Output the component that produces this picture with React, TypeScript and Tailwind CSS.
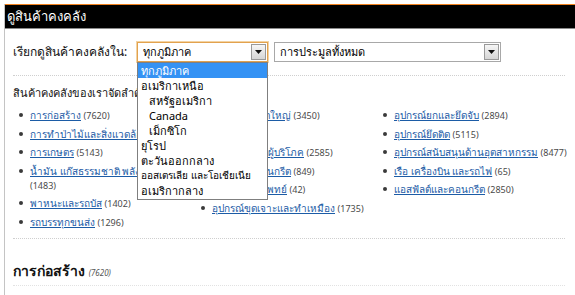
import React from "react";

type Item = { label: string; count: number; br?: boolean };

const columns: Item[][] = [
  [
    { label: "การก่อสร้าง", count: 7620 },
    { label: "การทำป่าไม้และสิ่งแวดล้อม", count: 1870 },
    { label: "การเกษตร", count: 5143 },
    { label: "น้ำมัน แก๊สธรรมชาติ พลังงาน", count: 1483, br: true },
    { label: "พาหนะและรถบัส", count: 1402 },
    { label: "รถบรรทุกขนส่ง", count: 1296 },
  ],
  [
    { label: "อุปกรณ์ขนาดใหญ่", count: 3450 },
    { label: "ท่าเรือ", count: 73 },
    { label: "สินค้าสำหรับผู้บริโภค", count: 2585 },
    { label: "ผลิตภัณฑ์คอนกรีต", count: 849 },
    { label: "อุปกรณ์การแพทย์", count: 42 },
    { label: "อุปกรณ์ขุดเจาะและทำเหมือง", count: 1735 },
  ],
  [
    { label: "อุปกรณ์ยกและยึดจับ", count: 2894 },
    { label: "อุปกรณ์ยึดติด", count: 5115 },
    { label: "อุปกรณ์สนับสนุนด้านอุตสาหกรรม", count: 8477 },
    { label: "เรือ เครื่องบิน และรถไฟ", count: 65 },
    { label: "แอสฟัลต์และคอนกรีต", count: 2850 },
  ],
];

const regions = [
  { label: "ทุกภูมิภาค", indent: false, active: true },
  { label: "อเมริกาเหนือ", indent: false },
  { label: "สหรัฐอเมริกา", indent: true },
  { label: "Canada", indent: true },
  { label: "เม็กซิโก", indent: true },
  { label: "ยุโรป", indent: false },
  { label: "ตะวันออกกลาง", indent: false },
  { label: "ออสเตรเลีย และโอเชียเนีย", indent: false, small: true },
  { label: "อเมริกากลาง", indent: false },
];

function ArrowButton() {
  return (
    <span className="flex h-full w-[15px] items-center justify-center border border-[#9a9a9a] bg-gradient-to-b from-[#f6f6f6] to-[#d6d6d6]">
      <svg width="7" height="4" viewBox="0 0 7 4">
        <path d="M0 0h7L3.5 4z" fill="#111" />
      </svg>
    </span>
  );
}

function SelectBox({ value, width, focused }: { value: string; width: string; focused?: boolean }) {
  return (
    <div
      className={`flex h-[20px] ${width} items-stretch bg-white ${
        focused ? "border border-[#e2a24e] ring-1 ring-[#f3d3a3]" : "border border-[#a8a8a8]"
      }`}
    >
      <span className="flex flex-1 items-center whitespace-nowrap pl-[5px] text-[11px] text-black">{value}</span>
      <div className="py-[1px] pr-[1px]">
        <ArrowButton />
      </div>
    </div>
  );
}

function Bullet() {
  return <span className="mt-[5px] h-[4px] w-[4px] shrink-0 rounded-full bg-[#3a3a3a]" />;
}

export default function App() {
  return (
    <div className="min-h-screen overflow-hidden bg-white pl-[4px] pt-[4px] font-['Tahoma','Noto_Sans','Liberation_Sans',sans-serif]">
      <div className="min-h-[300px] border-l border-[#c4c4c4]">
        <div className="flex h-[25px] items-center border-t border-b border-t-[#f0801c] border-b-[#8a8a8a] bg-black pl-[2px] text-[13px] text-white">
          ดูสินค้าคงคลัง
        </div>

        <div className="pl-[8px] pr-[10px]">
          <div className="mt-[13px] flex h-[20px] items-center">
            <span className="w-[124px] whitespace-nowrap text-[12px] text-[#111]">เรียกดูสินค้าคงคลังใน:</span>
            <div className="relative">
              <SelectBox value="ทุกภูมิภาค" width="w-[131px]" focused />
              <ul className="absolute left-0 top-[20px] z-10 w-[131px] border border-[#7f7f7f] bg-white pb-[1px]">
                {regions.map((r) => (
                  <li
                    key={r.label}
                    className={`h-[15px] whitespace-nowrap leading-[15px] ${r.small ? "text-[10px]" : "text-[11px]"} ${
                      r.active ? "bg-[#3492f4] text-white" : "text-black"
                    } ${r.indent ? "pl-[11px]" : "pl-[3px]"}`}
                  >
                    {r.label}
                  </li>
                ))}
              </ul>
            </div>
            <div className="ml-[6px]">
              <SelectBox value="การประมูลทั้งหมด" width="w-[227px]" />
            </div>
          </div>

          <div className="mt-[13px] border-t border-dotted border-[#cfcfcf]" />

          <p className="mt-[10px] whitespace-nowrap text-[11px] leading-[14px] text-[#111]">
            สินค้าคงคลังของเราจัดลำดับตามประเภท
          </p>

          <div className="mt-[8px] grid grid-cols-[182px_182px_1fr]">
            {columns.map((col, ci) => (
              <ul key={ci} className="flex flex-col gap-[4.6px]">
                {col.map((it) => (
                  <li
                    key={it.label}
                    className={`flex gap-[7px] overflow-visible whitespace-nowrap pl-[6px] text-[10px] leading-[14px] ${
                      it.br ? "h-[28px]" : "h-[14px]"
                    }`}
                  >
                    <Bullet />
                    <span>
                      <a href="#" className="text-[#1c5ca6] underline">
                        {it.label}
                      </a>
                      {it.br ? <br /> : " "}
                      <span className="text-[9px] text-[#4a4a4a]">({it.count})</span>
                    </span>
                  </li>
                ))}
              </ul>
            ))}
          </div>

          <div className="mt-[9px] border-t border-dotted border-[#cfcfcf]" />

          <h2 className="mt-[23px] whitespace-nowrap text-[14px] font-bold leading-[18px] text-[#111]">
            การก่อสร้าง <span className="text-[8px] font-normal italic text-[#555]">(7620)</span>
          </h2>

          <div className="mt-[3px] border-t border-dotted border-[#e2e2e2]" />

          <div className="mt-[12px] grid grid-cols-[182px_182px_1fr] text-[11px] leading-[14px] text-[#e8822a]">
            <span className="pl-[18px]">รถตักล้อยาง</span>
            <span className="pl-[18px]">รถขุด</span>
            <span className="pl-[18px]">เครื่องปั่นไฟ ริ้ว</span>
          </div>
        </div>
      </div>
    </div>
  );
}
